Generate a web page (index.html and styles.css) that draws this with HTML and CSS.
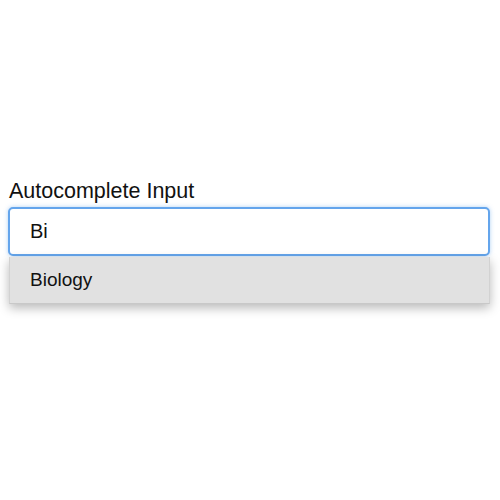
FILE: index.html
```html
<!DOCTYPE html>
<html>
<head>
<meta charset="utf-8">
<link rel="stylesheet" href="styles.css">
</head>
<body>
<div class="page">
  <div class="field">
    <label class="label" for="ac">Autocomplete Input</label>
    <div class="combo">
      <input id="ac" class="input" type="text" value="Bi">
      <ul class="menu">
        <li class="option">Biology</li>
      </ul>
    </div>
  </div>
</div>
</body>
</html>
```
FILE: styles.css
```css
html, body {
  margin: 0;
  padding: 0;
  background: #ffffff;
}
.page {
  width: 500px;
  height: 500px;
  box-sizing: border-box;
  padding: 179px 10px 0 8px;
  font-family: "Liberation Sans", Arial, sans-serif;
  color: #111111;
}
.field {
  display: flex;
  flex-direction: column;
}
.label {
  font-size: 21.5px;
  line-height: 24px;
  padding-left: 1px;
  margin-bottom: 4px;
}
.combo {
  position: relative;
}
.input {
  display: block;
  width: 100%;
  box-sizing: border-box;
  height: 49px;
  margin: 0;
  padding: 0 0 0 20px;
  border: 2px solid #64a5ec;
  border-radius: 5px;
  box-shadow: 0 0 4px rgba(100, 165, 236, 0.5);
  font-family: "Liberation Sans", Arial, sans-serif;
  font-size: 20px;
  color: #111111;
  outline: none;
  background: #fff;
}
.menu {
  list-style: none;
  margin: 1px 0 0 1px;
  padding: 0;
  background: #e1e1e1;
  border: 1px solid #d2d2d2;
  border-top: none;
  border-bottom-color: #c8c8c8;
  box-shadow: 0 4px 10px rgba(0, 0, 0, 0.28);
}
.option {
  height: 46px;
  display: flex;
  align-items: center;
  padding-left: 20px;
  font-size: 19px;
  color: #111111;
}
```
